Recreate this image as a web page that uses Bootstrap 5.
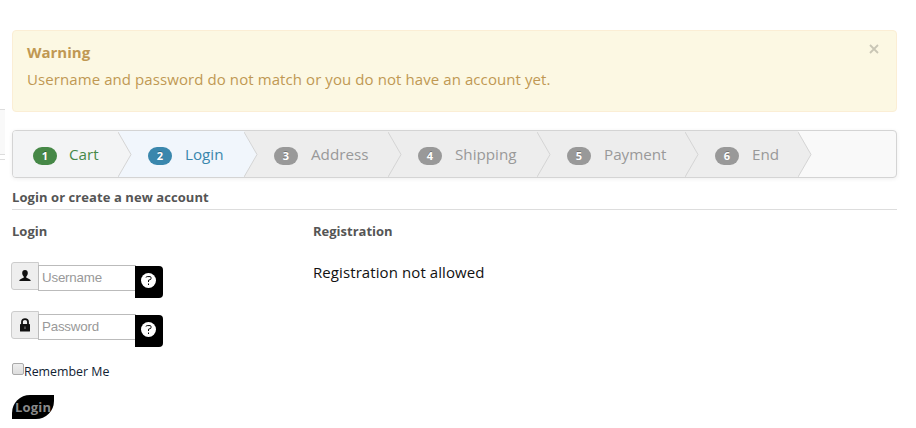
<!DOCTYPE html>
<html lang="en">
<head>
<meta charset="utf-8">
<meta name="viewport" content="width=device-width, initial-scale=1">
<title>Login</title>
<link href="https://cdn.jsdelivr.net/npm/bootstrap@5.3.0/dist/css/bootstrap.min.css" rel="stylesheet">
<style>
body{font-family:"Open Sans","Noto Sans",sans-serif;background:#fff;color:#111;height:428px;overflow:hidden}
.side-edge{width:5px;margin:109px 7px 0 0;height:51px;border-bottom:1px solid #ddd}
.side-edge div{height:46px;background:#f9f9f9;border:solid #ddd;border-width:1px 0}
.page{width:885px;padding-top:30px}
.notice{height:82px;background:#fcf8e3;border:1px solid #fbeed5;border-radius:4px;color:#c09853;padding:10px 14px;margin-bottom:18px}
.notice h4{font-size:15px;line-height:22px;font-weight:700;margin:0 0 5px}
.notice p{font-size:15px;letter-spacing:.085px;line-height:22px;margin:0;white-space:nowrap}
.notice .dismiss{width:10px;height:10px;margin:3px 3px 0 0;padding:0;border:0;background:none;line-height:0}
.wizard{height:48px;border:1px solid #d4d4d4;border-radius:4px;background:#f9f9f9;box-shadow:0 1px 4px rgba(0,0,0,.065);overflow:hidden;margin:0;padding:0}
.wizard li{height:46px;background:#ededed;color:#999;font-size:15.2px;line-height:46px;padding-left:30px;flex:none;white-space:nowrap}
.wizard li>svg{position:absolute;left:100%;top:0;z-index:2}
.wizard .num{width:24px;height:18px;border-radius:9px;background:#999;color:#fff;font-size:11px;font-weight:700;line-height:18px;text-align:center;margin:3px 13px 0 0;text-shadow:0 -1px 0 rgba(0,0,0,.25)}
.wizard .lbl{line-height:22px;margin-top:0}
.wizard .done{background:#f3f4f5;color:#468847}.done .num{background:#468847}
.wizard .now{background:#f1f6fc;color:#3a87ad}.now .num{background:#3a87ad}
.w1{width:105px}.w2{width:126px}.w3{width:144px}.w4{width:149px}.w5{width:148px}.w6{width:113px}
.wizard .w1{padding-left:20px}
.wizard .w1 .num{margin-right:12px}
h3{font-size:13px;font-weight:700;color:#555;line-height:20px;margin:0}
.main-title{height:32px;padding-top:9px;border-bottom:1px solid #ddd;letter-spacing:.07px}
.col-login{width:301px;padding-top:11px}
.fields{padding-top:21px;height:122px}
.field{height:49px}
.field .ico{width:28px;height:28px;border:1px solid #ccc;background:#eee;border-radius:3px 0 0 3px;margin-left:-1px}
.field input{width:98px;height:26px;margin:3px 0 0 -1px;border:1px solid #bbb;border-radius:0;padding:0 3px 1px;font:13.33px "Liberation Sans",Arial,sans-serif;letter-spacing:-.2px;box-shadow:none}
.field input::placeholder{color:#999;opacity:1}
.field .help{width:28px;height:32px;background:#000;border:0;border-radius:0 4px 4px 0;margin:4px 0 0 -1px;padding:0 2px 3px 0}
.tick{width:12px;height:12px;appearance:none;border:1px solid #aaa;border-radius:2px;background:linear-gradient(#eee,#ddd);margin:0}
.remember{font-size:12.4px;line-height:18px;color:#123}
.go{width:42px;height:24px;border:0;background:#000;color:#8a8a8a;border-radius:18px 0;font-size:13px;letter-spacing:.2px;font-weight:700;line-height:24px;padding:0;margin-top:14px}
.reg p{font-size:15px;letter-spacing:.09px;line-height:22px}
</style>
</head>
<body class="d-flex align-items-start">
<div class="side-edge flex-shrink-0"><div></div></div>
<main class="page flex-shrink-0">
<div class="notice d-flex justify-content-between align-items-start" role="alert">
<div><h4>Warning</h4><p>Username and password do not match or you do not have an account yet.</p></div>
<button class="dismiss" type="button" aria-label="Close"><svg width="10" height="10" viewBox="0 0 10 10"><path d="M1 1l8 8M9 1l-8 8" stroke="#c9c6b5" stroke-width="1.8"/></svg></button>
</div>
<ol class="wizard d-flex list-unstyled">
<li class="w1 done d-flex align-items-center position-relative"><span class="num">1</span><span class="lbl">Cart</span><svg width="14" height="46"><path d="M0 0L13 23.5L0 46Z" fill="#f3f4f5"/><path d="M0 1L13 23.5L0 46" fill="none" stroke="#d4d4d4"/></svg></li>
<li class="w2 now d-flex align-items-center position-relative"><span class="num">2</span><span class="lbl">Login</span><svg width="14" height="46"><path d="M0 0L13 23.5L0 46Z" fill="#f1f6fc"/><path d="M0 1L13 23.5L0 46" fill="none" stroke="#d4d4d4"/></svg></li>
<li class="w3 d-flex align-items-center position-relative"><span class="num">3</span><span class="lbl">Address</span><svg width="14" height="46"><path d="M0 0L13 23.5L0 46Z" fill="#ededed"/><path d="M0 1L13 23.5L0 46" fill="none" stroke="#d4d4d4"/></svg></li>
<li class="w4 d-flex align-items-center position-relative"><span class="num">4</span><span class="lbl">Shipping</span><svg width="14" height="46"><path d="M0 0L13 23.5L0 46Z" fill="#ededed"/><path d="M0 1L13 23.5L0 46" fill="none" stroke="#d4d4d4"/></svg></li>
<li class="w5 d-flex align-items-center position-relative"><span class="num">5</span><span class="lbl">Payment</span><svg width="14" height="46"><path d="M0 0L13 23.5L0 46Z" fill="#ededed"/><path d="M0 1L13 23.5L0 46" fill="none" stroke="#d4d4d4"/></svg></li>
<li class="w6 d-flex align-items-center position-relative"><span class="num">6</span><span class="lbl">End</span><svg width="14" height="46"><path d="M0 0L13 23.5L0 46Z" fill="#ededed"/><path d="M0 1L13 23.5L0 46" fill="none" stroke="#d4d4d4"/></svg></li>
</ol>
<h3 class="main-title">Login or create a new account</h3>
<div class="d-flex">
<form class="col-login">
<h3>Login</h3>
<div class="fields">
<div class="field d-flex align-items-start">
<span class="ico d-flex align-items-center justify-content-center"><svg width="12" height="12" viewBox="0 0 12 12" fill="#111"><path d="M6 0C4.2 0 3.2 1.3 3.2 3c0 1.500.6 2.700 1.500 3.500v1.200C3 8.600.4 8.900.2 11h11.600C11.600 8.900 9 8.600 7.300 7.700V6.500C8.200 5.700 8.800 4.500 8.800 3 8.800 1.300 7.800 0 6 0Z"/></svg></span>
<input class="form-control" type="text" placeholder="Username" aria-label="Username">
<button class="help d-flex align-items-center justify-content-center" type="button" aria-label="Username help"><svg width="15" height="15" viewBox="0 0 15 15"><circle cx="7.500" cy="7.500" r="7.500" fill="#fff"/><path d="M5 4.500Q5.200 3.600 6.200 3.600H9Q10 3.600 10 4.600V5.700Q10 6.500 9 6.700L7.500 7.200V9M7.500 10.500V12" fill="none" stroke="#000" stroke-width="1"/></svg></button>
</div>
<div class="field d-flex align-items-start">
<span class="ico d-flex align-items-center justify-content-center"><svg width="12" height="14" viewBox="0 0 12 14"><path d="M3 6V3.700C3 .2 9 .2 9 3.700V6" fill="none" stroke="#111" stroke-width="1.800"/><rect x="1" y="6" width="10" height="7.500" rx=".6" fill="#111"/><path d="M6 8.500v2.500" stroke="#888"/></svg></span>
<input class="form-control" type="password" placeholder="Password" aria-label="Password">
<button class="help d-flex align-items-center justify-content-center" type="button" aria-label="Password help"><svg width="15" height="15" viewBox="0 0 15 15"><circle cx="7.500" cy="7.500" r="7.500" fill="#fff"/><path d="M5 4.500Q5.200 3.600 6.200 3.600H9Q10 3.600 10 4.600V5.700Q10 6.500 9 6.700L7.500 7.200V9M7.500 10.500V12" fill="none" stroke="#000" stroke-width="1"/></svg></button>
</div>
</div>
<label class="remember d-flex align-items-start"><input class="tick" type="checkbox"><span>Remember Me</span></label>
<button class="go d-block" type="button">Login</button>
</form>
<section class="reg col-login">
<h3>Registration</h3>
<p class="mb-0 mt-3 pt-1">Registration not allowed</p>
</section>
</div>
</main>
<script src="https://cdn.jsdelivr.net/npm/bootstrap@5.3.0/dist/js/bootstrap.bundle.min.js"></script>
</body>
</html>
